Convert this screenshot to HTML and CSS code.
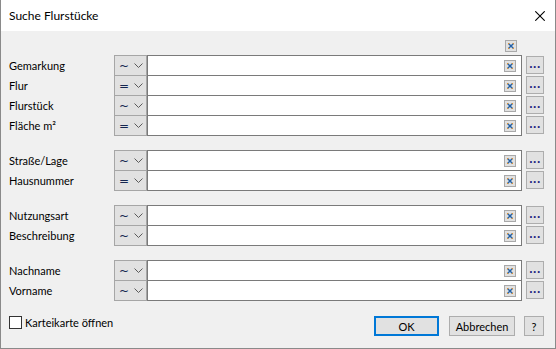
FILE: index.html
```html
<!DOCTYPE html>
<html lang="de">
<head>
<meta charset="UTF-8">
<title>Suche Flurstücke</title>
<link rel="stylesheet" href="styles.css">
</head>
<body>

<div class="window">
  <div class="titlebar">
    <span class="title">Suche Flurstücke</span>
    <svg class="close" width="10" height="10" viewBox="0 0 10 10">
      <path d="M0.3 0.3 L9.7 9.7 M9.7 0.3 L0.3 9.7" stroke="#000" stroke-width="1.1" fill="none"/>
    </svg>
  </div>

  <div class="content">
    <div class="topclear">
      <svg class="clear" width="12" height="12" viewBox="0 0 12 12"><use href="#xicon"/></svg>
    </div>

    <div class="group">
      <div class="row"><label>Gemarkung</label><div class="combo"><span class="op">~</span><svg class="chev" width="9" height="6" viewBox="0 0 9 6"><use href="#chev"/></svg></div><div class="field"><svg class="clear" width="12" height="12" viewBox="0 0 12 12"><use href="#xicon"/></svg></div><button class="more">...</button></div>
      <div class="row"><label>Flur</label><div class="combo"><span class="op">=</span><svg class="chev" width="9" height="6" viewBox="0 0 9 6"><use href="#chev"/></svg></div><div class="field"><svg class="clear" width="12" height="12" viewBox="0 0 12 12"><use href="#xicon"/></svg></div><button class="more">...</button></div>
      <div class="row"><label>Flurstück</label><div class="combo"><span class="op">~</span><svg class="chev" width="9" height="6" viewBox="0 0 9 6"><use href="#chev"/></svg></div><div class="field"><svg class="clear" width="12" height="12" viewBox="0 0 12 12"><use href="#xicon"/></svg></div><button class="more">...</button></div>
      <div class="row"><label>Fläche m²</label><div class="combo"><span class="op">=</span><svg class="chev" width="9" height="6" viewBox="0 0 9 6"><use href="#chev"/></svg></div><div class="field"><svg class="clear" width="12" height="12" viewBox="0 0 12 12"><use href="#xicon"/></svg></div><button class="more">...</button></div>
    </div>

    <div class="group">
      <div class="row"><label>Straße/Lage</label><div class="combo"><span class="op">~</span><svg class="chev" width="9" height="6" viewBox="0 0 9 6"><use href="#chev"/></svg></div><div class="field"><svg class="clear" width="12" height="12" viewBox="0 0 12 12"><use href="#xicon"/></svg></div><button class="more">...</button></div>
      <div class="row"><label>Hausnummer</label><div class="combo"><span class="op">=</span><svg class="chev" width="9" height="6" viewBox="0 0 9 6"><use href="#chev"/></svg></div><div class="field"><svg class="clear" width="12" height="12" viewBox="0 0 12 12"><use href="#xicon"/></svg></div><button class="more">...</button></div>
    </div>

    <div class="group">
      <div class="row"><label>Nutzungsart</label><div class="combo"><span class="op">~</span><svg class="chev" width="9" height="6" viewBox="0 0 9 6"><use href="#chev"/></svg></div><div class="field"><svg class="clear" width="12" height="12" viewBox="0 0 12 12"><use href="#xicon"/></svg></div><button class="more">...</button></div>
      <div class="row"><label>Beschreibung</label><div class="combo"><span class="op">~</span><svg class="chev" width="9" height="6" viewBox="0 0 9 6"><use href="#chev"/></svg></div><div class="field"><svg class="clear" width="12" height="12" viewBox="0 0 12 12"><use href="#xicon"/></svg></div><button class="more">...</button></div>
    </div>

    <div class="group">
      <div class="row"><label>Nachname</label><div class="combo"><span class="op">~</span><svg class="chev" width="9" height="6" viewBox="0 0 9 6"><use href="#chev"/></svg></div><div class="field"><svg class="clear" width="12" height="12" viewBox="0 0 12 12"><use href="#xicon"/></svg></div><button class="more">...</button></div>
      <div class="row"><label>Vorname</label><div class="combo"><span class="op">~</span><svg class="chev" width="9" height="6" viewBox="0 0 9 6"><use href="#chev"/></svg></div><div class="field"><svg class="clear" width="12" height="12" viewBox="0 0 12 12"><use href="#xicon"/></svg></div><button class="more">...</button></div>
    </div>

    <div class="footer">
      <label class="check"><span class="box"></span>Karteikarte öffnen</label>
      <div class="buttons">
        <button class="btn default">OK</button>
        <button class="btn">Abbrechen</button>
        <button class="btn help">?</button>
      </div>
    </div>
  </div>
</div>

<svg width="0" height="0" class="defs">
  <defs>
    <g id="xicon">
      <rect x="0.5" y="0.5" width="11" height="11" fill="#e1e1e1" stroke="#a9a9a9"/>
      <path d="M3.5 3.5 L8.5 8.5 M8.5 3.5 L3.5 8.5" stroke="#2160a8" stroke-width="1.4" fill="none"/>
      <rect x="3" y="3" width="1.2" height="1.2" fill="#e0902e"/>
      <rect x="7.8" y="3" width="1.2" height="1.2" fill="#e0902e"/>
      <rect x="3" y="7.8" width="1.2" height="1.2" fill="#e0902e"/>
      <rect x="7.8" y="7.8" width="1.2" height="1.2" fill="#e0902e"/>
    </g>
    <polyline id="chev" points="0.5,0.5 4.5,4.5 8.5,0.5" fill="none" stroke="#5a5a5a" stroke-width="1"/>
  </defs>
</svg>

</body>
</html>
```

FILE: styles.css
```css
body {
  margin: 0;
  font-family: 'Lato', 'Noto Sans', sans-serif;
  font-size: 11px;
  color: #000;
  background: #f0f0f0;
}
.window {
  width: 556px;
  height: 349px;
  box-sizing: border-box;
  border: 1px solid #8a8a8a;
  border-top: none;
  background: #f0f0f0;
  display: flex;
  flex-direction: column;
}
.titlebar {
  height: 31px;
  background: #fff;
  display: flex;
  align-items: center;
  justify-content: space-between;
  padding: 0 10px 0 8px;
}
.title {
  font-size: 12px;
}
.content {
  padding: 0 0 0 8px;
  flex: 1;
  display: flex;
  flex-direction: column;
}
.topclear {
  height: 24px;
  display: flex;
  align-items: flex-start;
  padding-left: 496px;
}
.topclear .clear {
  margin-top: 9px;
}
.group {
  display: flex;
  flex-direction: column;
  margin-bottom: 15px;
}
.row {
  height: 20px;
  display: flex;
  align-items: flex-start;
}
.row label {
  width: 105px;
  line-height: 21px;
}
.combo {
  width: 33px;
  height: 21px;
  box-sizing: border-box;
  border: 1px solid #a6a6a6;
  background: #e1e1e1;
  display: flex;
  align-items: center;
  padding: 0 0 0 4px;
}
.op {
  width: 15px;
  font-family: 'DejaVu Sans', sans-serif;
  font-size: 12px;
  color: #152650;
  line-height: 18px;
}
.chev {
  margin-left: 0;
}
.field {
  width: 375px;
  height: 21px;
  box-sizing: border-box;
  border: 1px solid #7a7a7a;
  background: #fff;
  display: flex;
  align-items: center;
  justify-content: flex-end;
  padding-right: 5px;
}
.more {
  width: 18px;
  height: 18px;
  margin: 1px 0 0 4px;
  padding: 0 0 3px 0;
  box-sizing: border-box;
  border: 1px solid #adadad;
  background: #e1e1e1;
  font-family: 'Liberation Sans', sans-serif;
  font-size: 12px;
  font-weight: bold;
  letter-spacing: 0.5px;
  color: #262680;
  line-height: 1;
  display: flex;
  align-items: flex-end;
  justify-content: center;
}
.footer {
  display: flex;
  justify-content: space-between;
  align-items: flex-start;
  margin-top: 0;
}
.check {
  display: flex;
  align-items: center;
  height: 14px;
}
.box {
  width: 13px;
  height: 13px;
  box-sizing: border-box;
  border: 1px solid #333;
  background: #fff;
  margin-right: 3px;
}
.buttons {
  display: flex;
  gap: 10px;
  padding-right: 11px;
  margin-top: 1px;
}
.btn {
  height: 20px;
  box-sizing: border-box;
  border: 1px solid #adadad;
  background: #e1e1e1;
  font-family: inherit;
  font-size: 11px;
  color: #000;
  padding: 0;
}
.btn.default {
  width: 65px;
  border: 2px solid #0078d7;
}
.btn:nth-child(2) {
  width: 66px;
}
.btn.help {
  width: 20px;
  margin-left: -1px;
}
.defs {
  position: absolute;
}
```
